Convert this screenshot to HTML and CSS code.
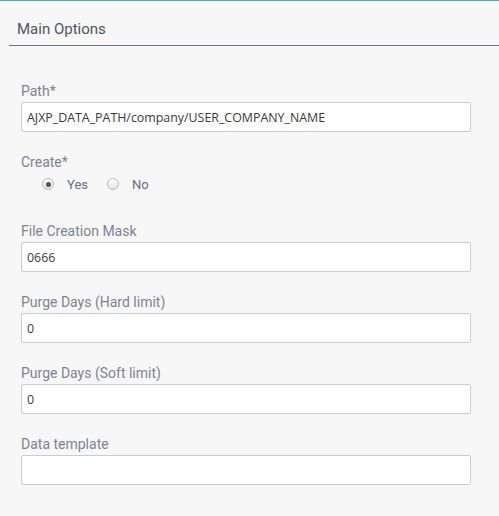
FILE: index.html
```html
<!DOCTYPE html>
<html>
<head>
<meta charset="utf-8">
<link rel="stylesheet" href="styles.css">
</head>
<body>
<div class="page">
  <div class="section-head"><h2 class="section-title">Main Options</h2></div>
  <form class="form">
    <div class="field">
      <label class="field-label">Path*</label>
      <input class="text-input" type="text" value="AJXP_DATA_PATH/company/USER_COMPANY_NAME">
    </div>
    <div class="field">
      <label class="field-label">Create*</label>
      <div class="radio-row">
        <span class="radio radio-checked"></span><span class="radio-text radio-text-yes">Yes</span>
        <span class="radio"></span><span class="radio-text">No</span>
      </div>
    </div>
    <div class="field">
      <label class="field-label">File Creation Mask</label>
      <input class="text-input" type="text" value="0666">
    </div>
    <div class="field">
      <label class="field-label">Purge Days (Hard limit)</label>
      <input class="text-input" type="text" value="0">
    </div>
    <div class="field">
      <label class="field-label">Purge Days (Soft limit)</label>
      <input class="text-input" type="text" value="0">
    </div>
    <div class="field">
      <label class="field-label">Data template</label>
      <input class="text-input" type="text" value="">
    </div>
  </form>
</div>
</body>
</html>
```
FILE: styles.css
```css
html, body {
  margin: 0;
  padding: 0;
  background: #f7f7f7;
}
.page {
  border-top: 1px solid #4aa9a1;
  min-height: 515px;
  font-family: Roboto, "Noto Sans", sans-serif;
}
.section-head {
  margin-left: 9px;
  border-bottom: 1px solid #6d7680;
  height: 44px;
  display: flex;
  align-items: flex-end;
}
.section-title {
  margin: 0 0 7px 8px;
  font-size: 15px;
  line-height: 18px;
  font-weight: 400;
  color: #4d5660;
}
.form {
  padding: 37px 28px 0 21px;
  display: flex;
  flex-direction: column;
  gap: 22px;
}
.field {
  display: flex;
  flex-direction: column;
}
.field-label {
  font-size: 14px;
  line-height: 17px;
  color: #7b8590;
  margin-bottom: 2px;
}
.text-input {
  box-sizing: border-box;
  height: 30px;
  width: 100%;
  margin: 0;
  border: 1px solid #c8cbd0;
  border-radius: 2px;
  background: #fff;
  padding: 0 5px;
  font-family: "Open Sans", sans-serif;
  font-size: 12.4px;
  color: #3a3a3a;
}
.radio-row {
  display: flex;
  align-items: center;
  height: 22px;
  padding-left: 21px;
  padding-bottom: 6px;
}
.radio {
  box-sizing: border-box;
  width: 12px;
  height: 12px;
  border-radius: 50%;
  border: 1px solid #b8b8b8;
  background: linear-gradient(#fdfdfd, #e4e4e4);
  display: flex;
  align-items: center;
  justify-content: center;
}
.radio-checked::after {
  content: "";
  width: 5px;
  height: 5px;
  border-radius: 50%;
  background: #555;
}
.radio-text {
  font-size: 13px;
  color: #66707a;
  margin-left: 13px;
}
.radio-text-yes {
  margin-right: 19px;
}
```
